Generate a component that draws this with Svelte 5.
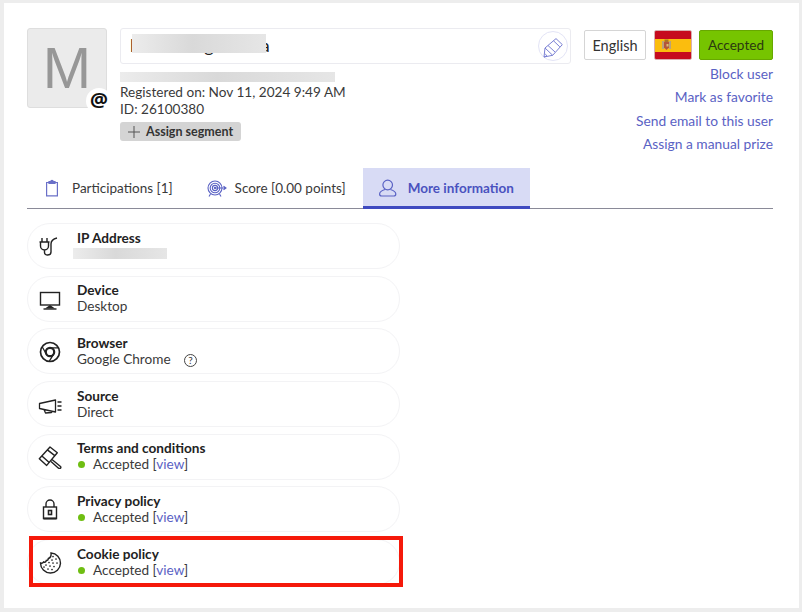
<script>
  const links = ["Block user", "Mark as favorite", "Send email to this user", "Assign a manual prize"];
</script>

<div class="page">
  <div class="panel">
    <header class="head">
      <div class="avatar">
        <span class="letter">M</span>
        <span class="at">@</span>
      </div>

      <div class="who">
        <div class="name-box">
          <span class="name">l<span class="g">g</span><span class="a">a</span></span>
          <span class="smear name-smear"></span>
          <button class="edit" aria-label="Edit">
            <svg width="24" height="24" viewBox="0 0 24 24" fill="none" stroke="#7a80d4" stroke-width="1" stroke-linejoin="round">
              <path d="M3 23l1-9L15 4.600l6.300 6-9.600 10.700z" />
              <path d="M12.500 6.800l6.300 6M7 11.500l7 6.500M4 14l7.700 7.300M3 23l3-1.200-1.800-1.800" />
            </svg>
          </button>
        </div>
        <div class="mail"><span class="smear mail-smear"></span></div>
        <div class="line">Registered on: Nov 11, 2024 9:49 AM</div>
        <div class="line">ID: 26100380</div>
        <button class="segment">
          <svg width="12" height="12" viewBox="0 0 12 12" stroke="#555" stroke-width="1"><path d="M6 0v12M0 6h12" /></svg>
          Assign segment
        </button>
      </div>

      <div class="side">
        <div class="actions">
          <button class="lang">English</button>
          <div class="flag">
            <svg width="11" height="12" viewBox="0 0 11 12">
              <rect x="1" y="2" width="2" height="8" fill="#b9a27a" />
              <rect x="8" y="2" width="2" height="8" fill="#b9a27a" />
              <path d="M3 3h5v5.500L5.500 11 3 8.500z" fill="#b4553a" />
              <rect x="3.500" y="0.500" width="4" height="2.500" fill="#a8742a" />
              <rect x="5.500" y="5" width="2" height="2.500" fill="#d8c070" />
            </svg>
          </div>
          <button class="status">Accepted</button>
        </div>
        <div class="links">
          {#each links as l}
            <span class="link">{l}</span>
          {/each}
        </div>
      </div>
    </header>

    <nav class="tabs">
      <div class="tab">
        <svg width="20" height="18" viewBox="0 0 20 18" fill="none" stroke="#6a70c8" stroke-width="1.2">
          <path d="M5 3.500H2.600v13.400h10.800V3.500H11" />
          <path d="M5 4.500V2.500h1.800a1.200 1.200 0 0 1 2.400 0H11v2z" fill="#6a70c8" />
        </svg>
        Participations [1]
      </div>
      <div class="tab">
        <svg width="20" height="18" viewBox="0 0 20 18" fill="none" stroke="#5a62c4" stroke-width="1.1">
          <circle cx="8" cy="9" r="7" />
          <circle cx="8" cy="9" r="4.800" />
          <circle cx="8" cy="9" r="2.600" />
          <circle cx="8" cy="9" r="0.600" />
          <path d="M8 9h10M16.500 7.200L19 9l-2.500 1.800M3.500 15l-1.500 2.500M12.500 15l1.500 2.500" />
        </svg>
        Score [0.00 points]
      </div>
      <div class="tab active">
        <svg width="20" height="18" viewBox="0 0 20 18" fill="none" stroke="#5a62c4" stroke-width="1.2">
          <circle cx="8.700" cy="6" r="4.800" />
          <path d="M6 10.500C3 11.500 .6 12.500 .6 15c0 1.500 .6 2 2 2h12.200c1.400 0 2-.5 2-2 0-2.500-2.400-3.500-5.400-4.500" />
        </svg>
        More information
      </div>
    </nav>

    <ul class="rows">
      <li class="row">
        <svg class="ico" width="24" height="24" viewBox="0 0 24 24" fill="none" stroke="#222" stroke-width="1.400">
          <path d="M1.500 8h10M4 4v4M9 4v4M2.500 8v4a4 4 0 0 0 8 0V8M6.500 16v2.500c0 3.500 6.500 3.500 6.500-.5V10c0-3 1.500-5 6-6" />
        </svg>
        <div class="txt">
          <b>IP Address</b>
          <span class="smear ip-smear"></span>
        </div>
      </li>
      <li class="row">
        <svg class="ico" width="24" height="24" viewBox="0 0 24 24" fill="none" stroke="#222" stroke-width="1.400">
          <rect x="2.500" y="5.500" width="19" height="12.500" />
          <path d="M12 18l-5 3.500h10z" fill="#222" stroke="none" />
          <path d="M5.500 22h13" />
        </svg>
        <div class="txt"><b>Device</b><span>Desktop</span></div>
      </li>
      <li class="row">
        <svg class="ico" width="24" height="24" viewBox="0 0 24 24" fill="none" stroke="#222" stroke-width="1.700">
          <circle cx="12" cy="13" r="9.500" />
          <circle cx="12" cy="13" r="4.200" stroke-width="2.200" />
          <path d="M12 8.800h8.800M8.400 15.200L4.300 8M15.600 15.200l-4.400 7.200" stroke-width="1.300" />
        </svg>
        <div class="txt">
          <b>Browser</b>
          <span>Google Chrome <i class="help">?</i></span>
        </div>
      </li>
      <li class="row">
        <svg class="ico" width="24" height="24" viewBox="0 0 24 24" fill="none" stroke="#222" stroke-width="1.300" stroke-linejoin="round">
          <path d="M1.500 11.500L17.500 8v12L1.500 16.500zM6 17.500l1.500 3.500 6-.5 1-1.500M19.500 10h4M19.500 14h4M19.500 18h4" />
        </svg>
        <div class="txt"><b>Source</b><span>Direct</span></div>
      </li>
      <li class="row">
        <svg class="ico" width="24" height="24" viewBox="0 0 24 24" fill="none" stroke="#222" stroke-width="1.400" stroke-linejoin="round">
          <path d="M1.300 13.700L12 2l7.300 5.700L8.700 20.400z" />
          <path d="M3.900 10.900l7.300 6.700M9.400 4.900l7.400 5.700" />
          <path d="M14 14.500l8.500 7c1 1.500-.5 2.500-2 1.700L13 16.500" />
        </svg>
        <div class="txt">
          <b>Terms and conditions</b>
          <span><em class="dot"></em>Accepted [<a href="#view">view</a>]</span>
        </div>
      </li>
      <li class="row">
        <svg class="ico" width="24" height="24" viewBox="0 0 24 24" fill="none" stroke="#222" stroke-width="1.400">
          <rect x="5.500" y="10" width="13" height="11.500" />
          <path d="M8 10V7a4 4 0 0 1 8 0v3" />
          <rect x="10.500" y="13.500" width="3" height="4" stroke-width="1.600" />
          <path d="M5.500 21.500h13" stroke-width="2" />
        </svg>
        <div class="txt">
          <b>Privacy policy</b>
          <span><em class="dot"></em>Accepted [<a href="#view">view</a>]</span>
        </div>
      </li>
      <li class="row marked">
        <svg class="ico" width="24" height="24" viewBox="0 0 24 24" fill="none" stroke="#222" stroke-width="1.400">
          <path d="M13 3a10 10 0 1 1-10.500 10c1.500.5 2.500 0 3-1 1.200.5 2.500 0 2.800-1.500 1.200 0 2-.8 2-2C12 8 13.500 6 13 3z" />
          <path d="M15 6.500h.01M18 9h.01M14 10h.01M11 12.500h.01M15 13h.01M19 13h.01M8 15h.01M12 16h.01M16 16.500h.01M10 19h.01M14 19.500h.01M6 17h.01" stroke-width="1.700" stroke-linecap="round" />
        </svg>
        <div class="txt">
          <b>Cookie policy</b>
          <span><em class="dot"></em>Accepted [<a href="#view">view</a>]</span>
        </div>
        <div class="red"></div>
      </li>
    </ul>
  </div>
</div>

<style>
  :global(body) {
    margin: 0;
    background: #ededed;
  }

  .page {
    width: 802px;
    height: 612px;
    padding: 3px 3px 4px 4px;
    box-sizing: border-box;
    font-family: Lato, "Liberation Sans", sans-serif;
    font-size: 13.600px;
    color: #3a3a3a;
  }

  .panel {
    height: 605px;
    background: #fff;
    padding: 25px 26px 0 23px;
    box-sizing: border-box;
  }

  .head {
    display: flex;
    height: 140px;
  }

  .avatar {
    position: relative;
    width: 80px;
    height: 80px;
    box-sizing: border-box;
    background: #ebebeb;
    border: 1px solid #dedede;
    border-radius: 3px;
    display: flex;
    align-items: center;
    justify-content: center;
  }

  .letter {
    font-family: "Liberation Sans", sans-serif;
    font-size: 58px;
    color: #979797;
    line-height: 1;
  }

  .at {
    position: absolute;
    right: -6px;
    bottom: -7px;
    width: 26px;
    height: 26px;
    border-radius: 50%;
    background: #fff;
    color: #111;
    font-family: "Noto Sans", sans-serif;
    font-weight: 700;
    font-size: 20px;
    line-height: 23px;
    text-align: center;
  }

  .who {
    width: 451px;
    margin-left: 13px;
    display: flex;
    flex-direction: column;
    align-items: flex-start;
  }

  .name-box {
    position: relative;
    width: 100%;
    height: 36px;
    box-sizing: border-box;
    border: 1px solid #ebebf0;
    border-radius: 3px;
    display: flex;
    align-items: center;
    padding: 0 0 3px 9px;
  }

  .name {
    font-size: 18px;
    color: #222;
  }

  .g {
    margin-left: 70px;
  }

  .a {
    margin-left: 47px;
  }

  .smear {
    display: block;
    background: linear-gradient(90deg, #ececec, #d9d9d9 45%, #e6e6e6);
  }

  .name-smear {
    position: absolute;
    left: 11px;
    top: 5px;
    width: 134px;
    height: 19px;
  }

  .edit {
    position: absolute;
    right: 2px;
    top: 2px;
    width: 30px;
    height: 30px;
    padding: 0;
    border-radius: 50%;
    border: 1px solid #e3e4f6;
    background: #fff;
    display: flex;
    align-items: center;
    justify-content: center;
  }

  .mail {
    height: 20px;
    display: flex;
    align-items: flex-end;
  }

  .mail-smear {
    width: 215px;
    height: 10px;
    margin-bottom: 2px;
  }

  .line {
    line-height: 17px;
  }

  .segment {
    margin-top: 4px;
    width: 121px;
    height: 19px;
    padding: 0 0 0 8px;
    border: 0;
    border-radius: 3px;
    background: #d4d4d4;
    font: 700 12.500px Lato, sans-serif;
    color: #333;
    display: flex;
    align-items: center;
    gap: 6px;
  }

  .side {
    flex: 1;
    display: flex;
    flex-direction: column;
    align-items: flex-end;
    padding-top: 2px;
  }

  .actions {
    display: flex;
    gap: 7px;
    height: 30px;
  }

  .lang {
    width: 62px;
    margin-right: 1px;
    border: 1px solid #d5d5d5;
    border-radius: 2px;
    background: #fff;
    font: 14.500px Lato, sans-serif;
    color: #333;
    padding: 0;
  }

  .flag {
    width: 38px;
    box-sizing: border-box;
    border: 1px solid #d9b0b0;
    border-radius: 2px;
    background: linear-gradient(#c60b1e 28%, #fbbd0e 28%, #fbbd0e 76%, #c60b1e 76%);
    display: flex;
    align-items: center;
    padding-left: 6px;
  }

  .status {
    width: 74px;
    border: 1px solid #67a800;
    border-radius: 2px;
    background: #76c400;
    font: 13.600px Lato, sans-serif;
    color: #2b3a10;
    padding: 0;
  }

  .links {
    display: flex;
    flex-direction: column;
    align-items: flex-end;
    gap: 6.300px;
    margin-top: 5px;
    font-size: 13.800px;
    line-height: 17px;
    color: #5a62c4;
  }

  .tabs {
    display: flex;
    height: 41px;
    box-sizing: border-box;
    border-bottom: 1px solid #8a8a98;
    font-size: 13.500px;
  }

  .tab {
    display: flex;
    align-items: center;
    gap: 8px;
    padding: 1px 17px 0;
    border-bottom: 3px solid transparent;
    margin-bottom: -1px;
  }

  .tab.active {
    background: #d8dbf5;
    border-bottom-color: #3f4ac0;
    color: #4a52bf;
    font-weight: 700;
    gap: 9px;
    padding: 1px 16px 0;
  }

  .rows {
    list-style: none;
    margin: 14px 0 0;
    padding: 0;
    display: flex;
    flex-direction: column;
    gap: 6.700px;
  }

  .row {
    position: relative;
    width: 373px;
    height: 46px;
    box-sizing: border-box;
    border: 1px solid #f3f3f5;
    border-radius: 23px;
    display: flex;
    align-items: center;
    padding-left: 10px;
  }

  .ico {
    flex: none;
  }

  .txt {
    margin-left: 15px;
    padding-bottom: 1px;
    display: flex;
    flex-direction: column;
    line-height: 16px;
  }

  .txt b {
    color: #222;
  }

  .ip-smear {
    width: 94px;
    height: 11px;
    margin: 2px 0 3px -4px;
  }

  .help {
    display: inline-block;
    width: 11px;
    height: 11px;
    margin-left: 10px;
    border: 1px solid #444;
    border-radius: 50%;
    font: 10px/11px Lato, sans-serif;
    text-align: center;
    vertical-align: 0;
  }

  .dot {
    display: inline-block;
    width: 7px;
    height: 7px;
    border-radius: 50%;
    background: #6fbe12;
    margin: 0 8px 0 1px;
    vertical-align: 1px;
  }

  a {
    color: #5a62c4;
    text-decoration: none;
  }

  .red {
    position: absolute;
    left: 1px;
    top: -4px;
    width: 374px;
    height: 51px;
    box-sizing: border-box;
    border: 4px solid #f5190a;
  }
</style>
